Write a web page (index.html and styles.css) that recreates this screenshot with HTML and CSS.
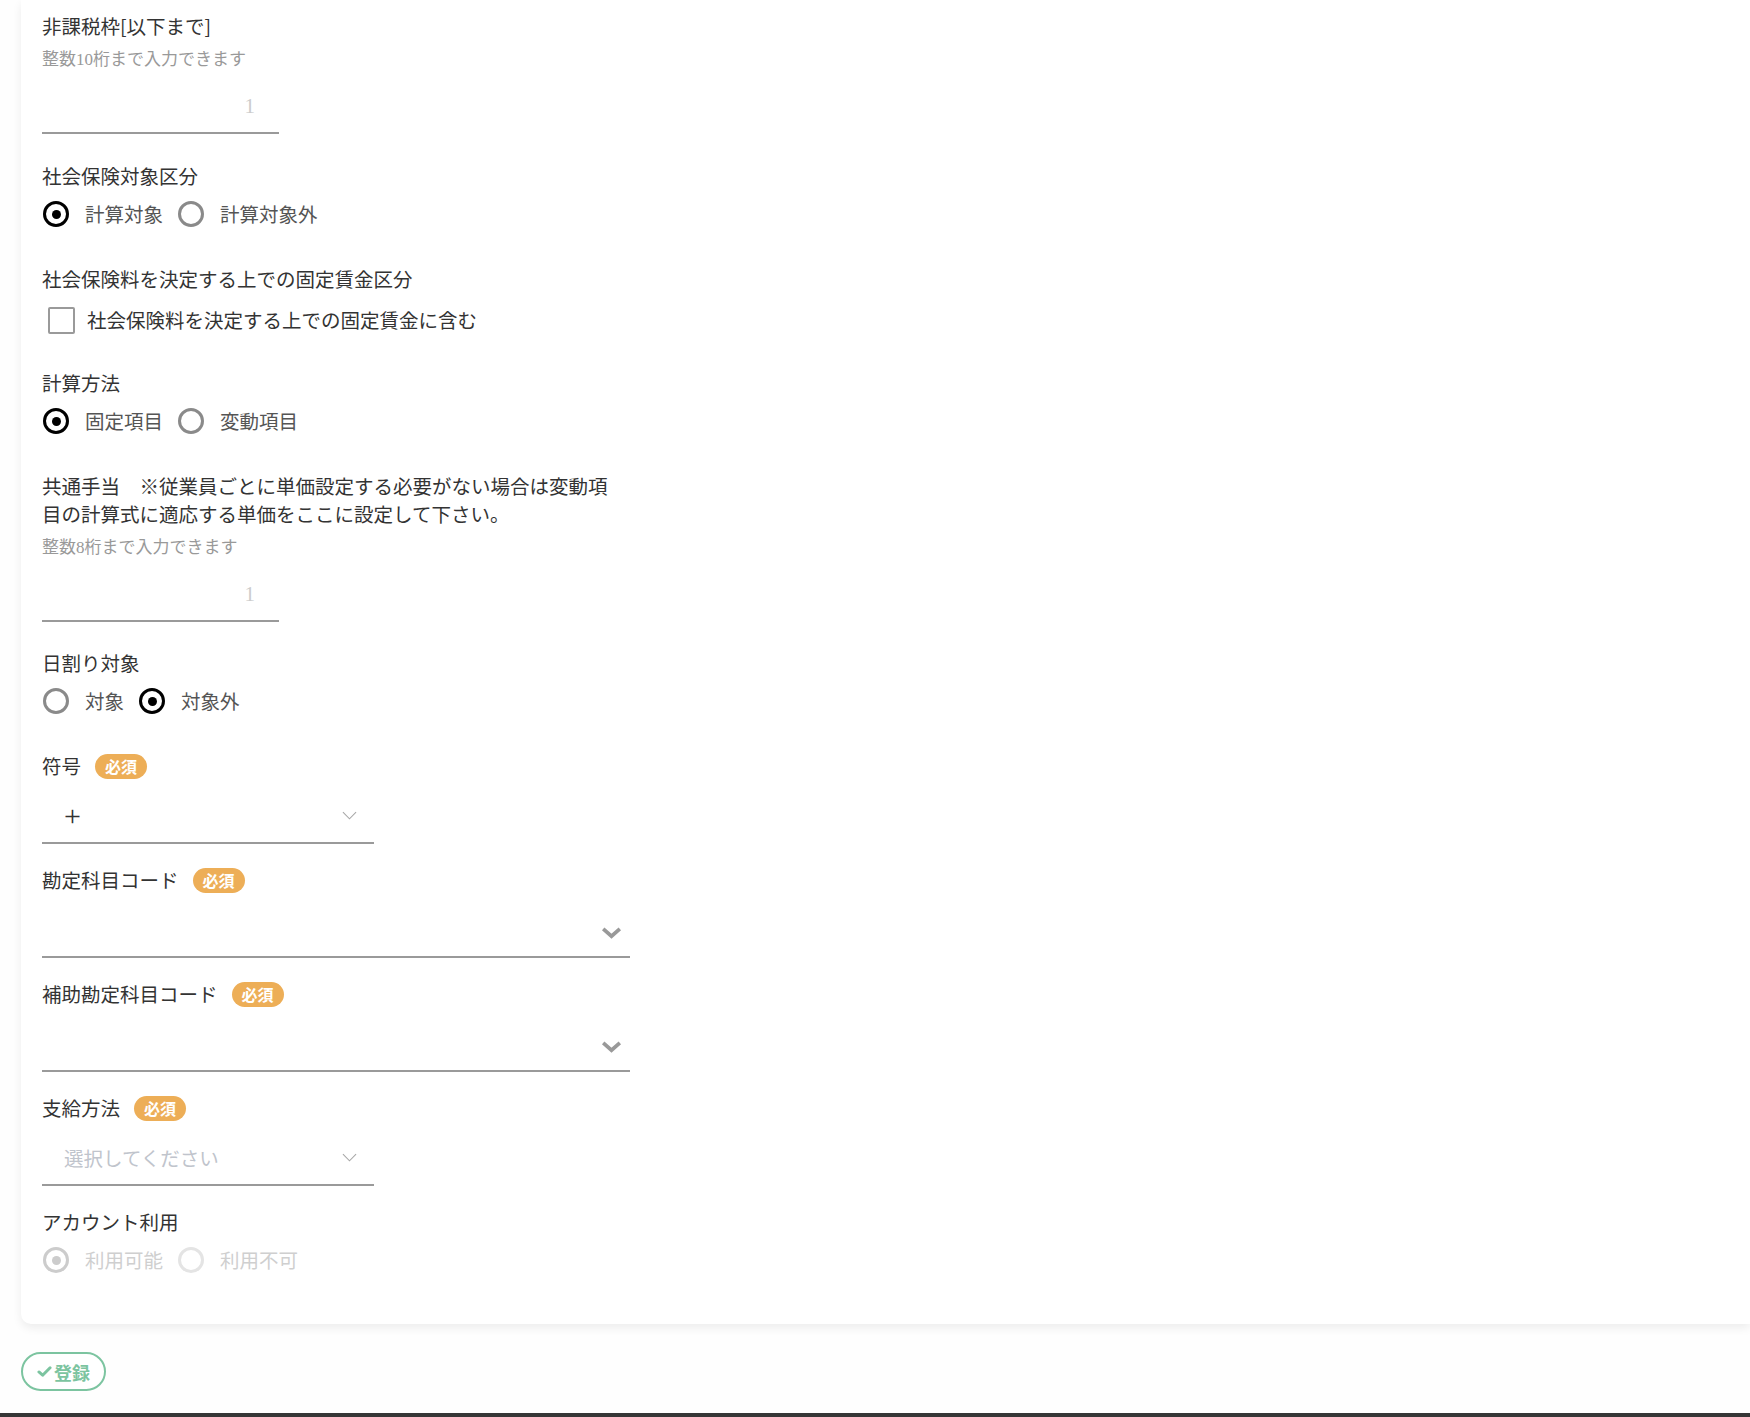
FILE: index.html
```html
<!DOCTYPE html>
<html lang="ja">
<head>
  <meta charset="UTF-8">
  <meta name="viewport" content="width=device-width, initial-scale=1.0">
  <title>手当設定</title>
  <link rel="stylesheet" href="styles.css">
</head>
<body>
  <div class="page">
    <div class="card">

      <div class="field field-input">
        <div class="label">非課税枠[以下まで]</div>
        <div class="hint">整数10桁まで入力できます</div>
        <input class="num-input" type="text" placeholder="1">
      </div>

      <div class="field field-radio">
        <div class="label">社会保険対象区分</div>
        <div class="radio-group">
          <label class="radio checked"><span class="radio-mark"></span><span class="radio-text">計算対象</span></label>
          <label class="radio"><span class="radio-mark"></span><span class="radio-text">計算対象外</span></label>
        </div>
      </div>

      <div class="field field-check">
        <div class="label">社会保険料を決定する上での固定賃金区分</div>
        <label class="checkbox"><span class="check-mark"></span><span class="check-text">社会保険料を決定する上での固定賃金に含む</span></label>
      </div>

      <div class="field field-radio">
        <div class="label">計算方法</div>
        <div class="radio-group">
          <label class="radio checked"><span class="radio-mark"></span><span class="radio-text">固定項目</span></label>
          <label class="radio"><span class="radio-mark"></span><span class="radio-text">変動項目</span></label>
        </div>
      </div>

      <div class="field field-input field-long">
        <div class="label label-wide">共通手当　※従業員ごとに単価設定する必要がない場合は変動項目の計算式に適応する単価をここに設定して下さい。</div>
        <div class="hint">整数8桁まで入力できます</div>
        <input class="num-input" type="text" placeholder="1">
      </div>

      <div class="field field-radio field-before-select">
        <div class="label">日割り対象</div>
        <div class="radio-group">
          <label class="radio"><span class="radio-mark"></span><span class="radio-text">対象</span></label>
          <label class="radio checked"><span class="radio-mark"></span><span class="radio-text">対象外</span></label>
        </div>
      </div>

      <div class="field field-select">
        <div class="label label-row">符号<span class="badge">必須</span></div>
        <div class="select select-sm">
          <span class="select-value sign">+</span>
          <svg class="arrow-thin" viewBox="0 0 16 9" fill="none" stroke="currentColor" stroke-width="1.2"><polyline points="1 1 8 8 15 1"/></svg>
        </div>
      </div>

      <div class="field field-select">
        <div class="label label-row">勘定科目コード<span class="badge">必須</span></div>
        <div class="select select-lg">
          <span class="select-value"></span>
          <svg class="arrow-bold" viewBox="0 0 22 13" fill="none" stroke="currentColor" stroke-width="4"><polyline points="2 2 11 10 20 2"/></svg>
        </div>
      </div>

      <div class="field field-select">
        <div class="label label-row">補助勘定科目コード<span class="badge">必須</span></div>
        <div class="select select-lg">
          <span class="select-value"></span>
          <svg class="arrow-bold" viewBox="0 0 22 13" fill="none" stroke="currentColor" stroke-width="4"><polyline points="2 2 11 10 20 2"/></svg>
        </div>
      </div>

      <div class="field field-select">
        <div class="label label-row">支給方法<span class="badge">必須</span></div>
        <div class="select select-sm">
          <span class="select-value placeholder">選択してください</span>
          <svg class="arrow-thin" viewBox="0 0 16 9" fill="none" stroke="currentColor" stroke-width="1.2"><polyline points="1 1 8 8 15 1"/></svg>
        </div>
      </div>

      <div class="field field-radio field-last">
        <div class="label">アカウント利用</div>
        <div class="radio-group disabled">
          <label class="radio checked"><span class="radio-mark"></span><span class="radio-text">利用可能</span></label>
          <label class="radio"><span class="radio-mark"></span><span class="radio-text">利用不可</span></label>
        </div>
      </div>

    </div>

    <div class="actions">
      <button class="button-save">
        <svg class="button-icon" viewBox="0 0 16 14" fill="none" stroke="currentColor" stroke-width="3.2" stroke-linecap="round" stroke-linejoin="round"><polyline points="2 7.5 6 11 14 3"/></svg>
        登録
      </button>
    </div>
  </div>
  <div class="bottom-bar"></div>
</body>
</html>
```

FILE: styles.css
```css
:root {
  --text: #333333;
  --text-soft: #555555;
  --text-hint: #999999;
  --line: #9a9a9a;
  --placeholder: #c0c4cc;
  --badge: #edae57;
  --green: #7cc4a0;
  --page-bg: #fefefe;
  --font-sans: "Noto Sans CJK JP", "Noto Sans", sans-serif;
  --font-serif: "Liberation Serif", "Noto Sans CJK JP", serif;
}

* {
  box-sizing: border-box;
}

html,
body {
  height: 100%;
}

body {
  margin: 0;
  display: flex;
  flex-direction: column;
  background-color: var(--page-bg);
  font-family: var(--font-sans);
  color: var(--text);
  overflow: hidden;
}

.page {
  flex: 1;
  padding-left: 21px;
}

.card {
  background-color: #ffffff;
  border-radius: 0 0 0 10px;
  box-shadow: 0 4px 10px rgba(0, 0, 0, 0.07);
  padding: 12px 21px 50px;
}

/* Fields */
.field {
  margin-bottom: 36px;
}

.field-input {
  margin-bottom: 28px;
}

.field-radio {
  margin-bottom: 37px;
}

.field-long {
  margin-bottom: 27px;
}

.field-check {
  margin-bottom: 35px;
}

.field-before-select {
  margin-bottom: 37px;
}

.field-select {
  margin-bottom: 22px;
}

.field-last {
  margin-bottom: 0;
}

.label {
  font-size: 19.5px;
  line-height: 28px;
  color: var(--text);
}

.label-wide {
  width: 575px;
}

.label-row {
  display: flex;
  align-items: center;
  gap: 14px;
}

.badge {
  display: inline-block;
  height: 25px;
  line-height: 25px;
  padding: 0 10px;
  border-radius: 13px;
  background-color: var(--badge);
  color: #ffffff;
  font-size: 16px;
  font-weight: 700;
}

.hint {
  margin-top: 9px;
  font-family: var(--font-serif);
  font-size: 17px;
  line-height: 22px;
  color: var(--text-hint);
}

/* Number input */
.num-input {
  display: block;
  width: 237px;
  height: 51px;
  margin-top: 12px;
  padding: 0 24px 2px 0;
  border: none;
  border-bottom: 2px solid var(--line);
  outline: none;
  background: transparent;
  font-family: var(--font-serif);
  font-size: 21px;
  text-align: right;
  color: var(--text);
}

.num-input::placeholder {
  color: #cccccc;
}

/* Radios */
.radio-group {
  display: flex;
  align-items: center;
  gap: 14px;
  height: 28px;
  margin-top: 10px;
}

.radio {
  display: flex;
  align-items: center;
  cursor: pointer;
}

.radio-mark {
  position: relative;
  width: 26px;
  height: 26px;
  margin-left: 1px;
  margin-right: 16px;
  border: 3.5px solid #8a8a8a;
  border-radius: 50%;
}

.radio.checked .radio-mark {
  border-color: #000000;
}

.radio.checked .radio-mark::after {
  content: "";
  position: absolute;
  top: 50%;
  left: 50%;
  width: 9px;
  height: 9px;
  margin: -4.5px 0 0 -4.5px;
  border-radius: 50%;
  background-color: #000000;
}

.radio-text {
  font-size: 19.5px;
  line-height: 28px;
  color: var(--text-soft);
}

.radio-group.disabled .radio-mark {
  border-color: #e4e4e4;
}

.radio-group.disabled .radio.checked .radio-mark {
  border-color: #cccccc;
}

.radio-group.disabled .radio.checked .radio-mark::after {
  background-color: #cccccc;
}

.radio-group.disabled .radio-text {
  color: #cfcfcf;
}

/* Checkbox */
.checkbox {
  display: flex;
  align-items: center;
  height: 28px;
  margin-top: 13px;
  padding-left: 6px;
}

.check-mark {
  width: 27px;
  height: 27px;
  margin-right: 12px;
  border: 2px solid #9a9a9a;
  border-radius: 2px;
}

.check-text {
  font-size: 19.5px;
  line-height: 28px;
  color: var(--text);
}

/* Selects */
.select {
  display: flex;
  align-items: center;
  justify-content: space-between;
  margin-top: 12px;
  border-bottom: 2px solid var(--line);
}

.select-sm {
  width: 332px;
  height: 52px;
  padding: 0 17px 3px 22px;
}

.select-lg {
  width: 588px;
  height: 52px;
  padding: 4px 8px 0 22px;
}

.select-value {
  font-size: 19.5px;
  color: var(--text);
}

.select-value.sign {
  font-family: var(--font-serif);
  font-size: 30px;
  line-height: 1;
}

.select-value.placeholder {
  color: var(--placeholder);
}

.arrow-thin {
  width: 15px;
  height: 9px;
  color: #a8a8a8;
}

.arrow-bold {
  width: 21px;
  height: 12px;
  color: #999999;
}

/* Actions */
.actions {
  margin-top: 28px;
}

.button-save {
  display: inline-flex;
  align-items: center;
  height: 39px;
  padding: 0 14px;
  border: 2px solid var(--green);
  border-radius: 20px;
  background-color: #ffffff;
  color: var(--green);
  font-family: var(--font-sans);
  font-size: 18px;
  font-weight: 700;
  cursor: pointer;
}

.button-icon {
  width: 15px;
  height: 13px;
  margin-right: 2px;
}

.bottom-bar {
  height: 4px;
  background-color: #363636;
}
```
